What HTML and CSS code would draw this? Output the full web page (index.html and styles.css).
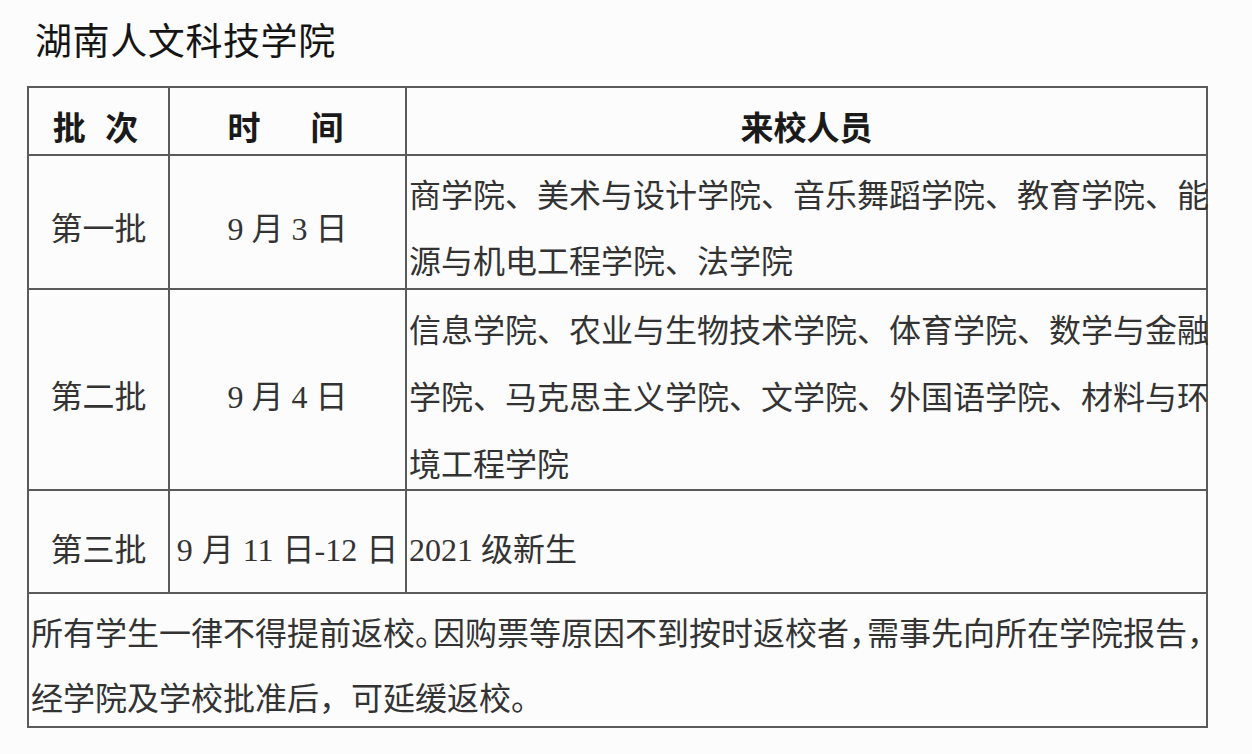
FILE: index.html
```html
<!DOCTYPE html>
<html lang="zh-CN">
<head>
<meta charset="utf-8">
<title>湖南人文科技学院</title>
<link rel="stylesheet" href="styles.css">
</head>
<body>
<div class="page">
  <h1 class="title">湖南人文科技学院</h1>
  <table class="schedule">
    <colgroup>
      <col class="c-batch">
      <col class="c-time">
      <col class="c-people">
    </colgroup>
    <thead>
      <tr class="row-head">
        <th class="spaced1">批&nbsp;次</th>
        <th class="spaced2">时&nbsp;&nbsp;&nbsp;&nbsp;间</th>
        <th>来校人员</th>
      </tr>
    </thead>
    <tbody>
      <tr class="row-1">
        <td class="center">第一批</td>
        <td class="center">9 月 3 日</td>
        <td class="list"><div class="txt">商学院、美术与设计学院、音乐舞蹈学院、教育学院、能<br>源与机电工程学院、法学院</div></td>
      </tr>
      <tr class="row-2">
        <td class="center">第二批</td>
        <td class="center">9 月 4 日</td>
        <td class="list"><div class="txt">信息学院、农业与生物技术学院、体育学院、数学与金融<br>学院、马克思主义学院、文学院、外国语学院、材料与环<br>境工程学院</div></td>
      </tr>
      <tr class="row-3">
        <td class="center">第三批</td>
        <td class="center wide">9 月 11 日-12 日</td>
        <td class="list">2021 级新生</td>
      </tr>
      <tr class="row-note">
        <td colspan="3" class="note"><div class="txt">所有学生一律不得提前返校<span class="half">。</span>因购票等原因不到按时返校者<span class="half">，</span>需事先向所在学院报告，<br>经学院及学校批准后，可延缓返校。</div></td>
      </tr>
    </tbody>
  </table>
</div>
</body>
</html>
```

FILE: styles.css
```css
html, body {
  margin: 0;
  padding: 0;
  background: #fcfcfd;
}

.page {
  padding: 14px 0 0 27px;
}

.title {
  margin: 0 0 22px 8px;
  font-family: "Noto Sans CJK SC", sans-serif;
  font-weight: 400;
  font-size: 37px;
  line-height: 50px;
  color: #151515;
  letter-spacing: 0.6px;
}

.schedule {
  border-collapse: collapse;
  width: 1181px;
  table-layout: fixed;
  font-family: "Liberation Serif", "Noto Sans CJK SC", serif;
  color: #333;
  font-size: 32px;
}

.c-batch { width: 141px; }
.c-time { width: 237px; }

.schedule th,
.schedule td {
  border: 2px solid #5a5a5a;
  padding: 0;
  vertical-align: top;
}

.schedule th {
  font-family: "Noto Sans CJK SC", sans-serif;
  font-weight: 700;
  font-size: 33px;
  color: #1a1a1a;
  text-align: center;
  line-height: 40px;
  padding-top: 18px;
}

.spaced1 { letter-spacing: 6px; }
.spaced2 { letter-spacing: 4px; }

.row-head { height: 68px; }
.row-1 { height: 134px; }
.row-2 { height: 201px; }
.row-3 { height: 103px; }
.row-note { height: 134px; }

.center {
  text-align: center;
  white-space: nowrap;
  line-height: 40px;
}

.row-1 .center { padding-top: 53px; }
.row-2 .center { padding-top: 87px; }
.row-3 td { padding-top: 39px; }

.wide {
  word-spacing: 1px;
}

.list {
  padding-left: 2px !important;
  white-space: nowrap;
  line-height: 40px;
}

.row-1 .list { padding-top: 7px; line-height: 66px; }
.row-1 .txt { margin-bottom: -12px; }

.row-2 .list { padding-top: 8px; line-height: 67px; }
.row-2 .txt { margin-bottom: -12px; }

.note {
  padding-left: 2px !important;
  padding-top: 8px !important;
  white-space: nowrap;
  line-height: 65px;
}

.note .txt { margin-bottom: -10px; }

.half {
  letter-spacing: -14px;
}
```
